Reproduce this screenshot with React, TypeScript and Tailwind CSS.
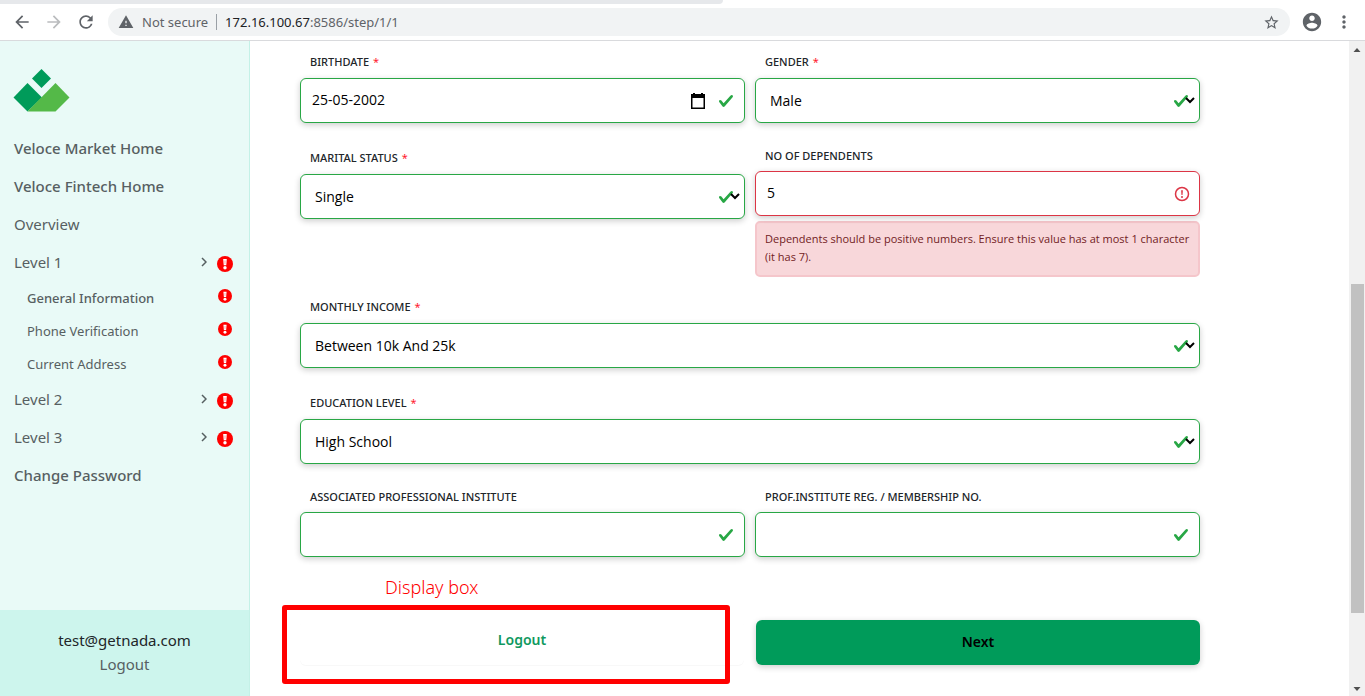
import { useState } from 'react';
import type { ReactNode } from 'react';
import { MdArrowBack, MdArrowForward, MdMoreVert, MdRefresh, MdStarBorder, MdWarning } from 'react-icons/md';

const control =
  'h-[45px] w-full appearance-none rounded-[6px] border bg-white text-sm text-black shadow-[0_2px_6px_rgba(0,0,0,0.2)] outline-none';

function CheckMark() {
  return (
    <svg viewBox="0 0 8 8" className="size-4" aria-hidden="true">
      <path
        fill="#28a745"
        d="M2.3 6.73.6 4.53c-.4-1.04.46-1.4 1.1-.8l1.1 1.4 3.4-3.8c.6-.63 1.6-.27 1.2.7l-4 4.6c-.43.5-.8.4-1.1.1z"
      />
    </svg>
  );
}

function AlertBadge({ className }: { className: string }) {
  return (
    <svg viewBox="0 0 16 16" className={className} aria-hidden="true">
      <circle cx="8" cy="8" r="8" fill="#ff0000" />
      <path d="M6.2 3h3.600l-.5 6.200H6.700z" fill="#fff" />
      <circle cx="8" cy="11.700" r="1.700" fill="#fff" />
      <path d="M7.500 4.500h1l-.15 3.600h-.7z" fill="#ff9090" />
    </svg>
  );
}

function Field({ id, label, required, children }: { id: string; label: string; required?: boolean; children: ReactNode }) {
  return (
    <div className="min-w-0">
      <label
        htmlFor={id}
        className={`flex gap-1 px-[10px] font-['Noto_Sans',sans-serif] text-[11px] leading-[18px] font-medium text-[#212529] ${required ? 'h-[27px] pt-[2px]' : 'h-6'}`}
      >
        {label}
        {required && <span className="font-normal text-[#ff1a2e]">*</span>}
      </label>
      {children}
    </div>
  );
}

function SelectBox({ id, options }: { id: string; options: string[] }) {
  return (
    <div className="relative">
      <select id={id} className={`${control} border-[#28a745] pr-10 pl-[14px]`}>
        {options.map((o) => (
          <option key={o}>{o}</option>
        ))}
      </select>
      <span className="pointer-events-none absolute inset-y-0 right-[11px] flex items-center">
        <CheckMark />
      </span>
      <svg
        viewBox="0 0 10 8"
        className="pointer-events-none absolute top-[18px] right-[5px] h-2 w-[10px]"
        fill="none"
        stroke="#000"
        strokeWidth="2"
        aria-hidden="true"
      >
        <path d="M1 2l4 4 4-4" />
      </svg>
    </div>
  );
}

function TextBox({ id, value }: { id: string; value: string }) {
  const [text, setText] = useState(value);
  return (
    <div className="relative">
      <input id={id} value={text} onChange={(e) => setText(e.target.value)} className={`${control} border-[#28a745] pr-10 pb-[2px] pl-[11px]`} />
      <span className="pointer-events-none absolute inset-y-0 right-[11px] flex items-center">
        <CheckMark />
      </span>
    </div>
  );
}

function Toolbar() {
  return (
    <header className="shrink-0 border-b border-[#d9dadd] bg-white">
      <div className="h-1 w-[53%] rounded-br-md bg-[#e6e8eb]" />
      <div className="flex h-9 items-center pr-[11px] pl-3 text-[#5f6368]">
        <button aria-label="Back" className="mr-3"><MdArrowBack size={20} /></button>
        <button aria-label="Forward" className="mr-3 text-[#babcbe]"><MdArrowForward size={20} /></button>
        <button aria-label="Reload" className="mr-3"><MdRefresh size={20} /></button>
        <div className="flex h-7 min-w-0 flex-1 items-center rounded-full bg-[#f1f3f4] px-[10px] text-[13px]">
          <MdWarning size={16} />
          <span className="ml-2 shrink-0 pt-px">Not secure</span>
          <span className="mx-2 h-4 w-px bg-[#9aa0a6]" />
          <span className="min-w-0 flex-1 truncate pt-px">
            <span className="text-[#202124]">172.16.100.67</span>:8586/step/1/1
          </span>
          <button aria-label="Bookmark this page"><MdStarBorder size={17} /></button>
        </div>
        <button aria-label="Profile" className="ml-[11px]">
          <svg viewBox="0 0 24 24" className="size-[22px]" fill="currentColor" aria-hidden="true">
            <path d="M12 2C6.480 2 2 6.480 2 12s4.480 10 10 10 10-4.480 10-10S17.520 2 12 2zm0 3c1.660 0 3 1.340 3 3s-1.340 3-3 3-3-1.340-3-3 1.340-3 3-3zm0 14.200c-2.500 0-4.710-1.280-6-3.220.03-1.990 4-3.080 6-3.080 1.990 0 5.970 1.090 6 3.080-1.290 1.940-3.500 3.220-6 3.220z" />
          </svg>
        </button>
        <button aria-label="Menu" className="ml-[11px]"><MdMoreVert size={20} /></button>
      </div>
    </header>
  );
}

function NavLink({ label, bold, level, sub }: { label: string; bold?: boolean; level?: boolean; sub?: boolean }) {
  return (
    <li>
      <a
        href="#"
        className={`flex items-center pr-4 ${sub ? 'h-[33px] pl-[27px] text-[13px]' : 'h-[38px] pl-[14px] text-[15px]'} ${bold ? 'font-medium' : ''}`}
      >
        <span className={sub ? 'flex-1' : 'flex-1 pb-[2px]'}>{label}</span>
        {level && (
          <svg viewBox="0 0 6 10" className="mr-[10px] mb-[2px] h-[10px] w-[6px]" fill="none" stroke="#555f61" strokeWidth="1.5" aria-hidden="true">
            <path d="M1 1l4 4-4 4" />
          </svg>
        )}
        {level && <AlertBadge className="mt-[2px] size-4" />}
        {sub && <AlertBadge className="mr-px mb-[6px] size-[14px]" />}
      </a>
    </li>
  );
}

function Sidebar() {
  return (
    <aside className="flex w-[250px] shrink-0 flex-col border-r border-[#c4f1e7] bg-[#e9faf7] text-[#575f62]">
      <a href="#" aria-label="Veloce" className="mt-7 mb-[18px] ml-[13px] w-fit">
        <svg viewBox="0 0 57 43" className="h-[43px] w-[57px]" aria-hidden="true">
          <path d="M28.500 0l9.500 9.500-9.500 9.500L19 9.500z" fill="#009b5a" />
          <path d="M14.500 14L29 28.500 14.500 42.500 0.500 28.500z" fill="#009b5a" />
          <path d="M42.500 14L56.500 28.500 42.500 42.500h-28z" fill="#54b948" />
        </svg>
      </a>
      <nav className="flex-1">
        <ul>
          <NavLink label="Veloce Market Home" bold />
          <NavLink label="Veloce Fintech Home" bold />
          <NavLink label="Overview" />
          <NavLink label="Level 1" level />
          <NavLink label="General Information" sub bold />
          <NavLink label="Phone Verification" sub />
          <NavLink label="Current Address" sub />
          <NavLink label="Level 2" level />
          <NavLink label="Level 3" level />
          <NavLink label="Change Password" bold />
        </ul>
      </nav>
      <div className="flex h-[86px] flex-col items-center bg-[#cdf5ed] pt-[18px] text-[15px] leading-6">
        <span className="text-[#212529]">test@getnada.com</span>
        <a href="#">Logout</a>
      </div>
    </aside>
  );
}

function ScrollBar() {
  return (
    <div className="flex w-4 shrink-0 flex-col items-center bg-[#f1f1f1]" aria-hidden="true">
      <svg viewBox="0 0 16 17" className="h-[17px] w-4"><path d="M4.500 11h7L8 7z" fill="#505050" /></svg>
      <div className="flex w-[13px] flex-1 flex-col">
        <div className="flex-[226]" />
        <div className="flex-[329] bg-[#c1c1c1]" />
        <div className="flex-[66]" />
      </div>
      <svg viewBox="0 0 16 17" className="h-[17px] w-4"><path d="M4.500 8h7L8 12z" fill="#505050" /></svg>
    </div>
  );
}

export default function App() {
  const [dependents, setDependents] = useState('5');
  const [birthdate, setBirthdate] = useState('25-05-2002');
  return (
    <div className="flex h-screen flex-col overflow-hidden bg-white font-['Noto_Sans',sans-serif]">
      <Toolbar />
      <div className="flex min-h-0 flex-1">
        <Sidebar />
        <main className="min-w-0 flex-1 overflow-hidden px-[50px] pt-[10px] font-['Open_Sans',sans-serif]">
          <form className="flex max-w-[900px] flex-col gap-6" onSubmit={(e) => e.preventDefault()}>
            <div className="grid grid-cols-2 gap-[10px]">
              <Field id="birthdate" label="BIRTHDATE" required>
                <div className="relative">
                  <input
                    id="birthdate"
                    value={birthdate}
                    onChange={(e) => setBirthdate(e.target.value)}
                    className={`${control} border-[#28a745] pr-16 pb-[2px] pl-[11px]`}
                  />
                  <div className="absolute inset-y-0 right-[11px] flex items-center gap-3">
                    <button type="button" aria-label="Choose date">
                      <svg viewBox="0 0 16 16" className="size-4" aria-hidden="true">
                        <path d="M3 0h2v1h6V0h2v1h2v15H1V1h2zM2.500 5v9.500h11V5z" fill="#000" fillRule="evenodd" />
                      </svg>
                    </button>
                    <CheckMark />
                  </div>
                </div>
              </Field>
              <Field id="gender" label="GENDER" required>
                <SelectBox id="gender" options={['Male', 'Female']} />
              </Field>
            </div>
            <div className="-mb-[5px] grid grid-cols-2 gap-[10px]">
              <Field id="marital" label="MARITAL STATUS" required>
                <SelectBox id="marital" options={['Single', 'Married']} />
              </Field>
              <Field id="dependents" label="NO OF DEPENDENTS">
                <div className="relative">
                  <input
                    id="dependents"
                    value={dependents}
                    onChange={(e) => setDependents(e.target.value)}
                    aria-describedby="dependents-error"
                    className={`${control} border-[#dc3545] pr-10 pb-[2px] pl-[11px]`}
                  />
                  <svg viewBox="0 0 16 16" className="pointer-events-none absolute top-[15px] right-[10px] size-4" aria-hidden="true">
                    <circle cx="8" cy="8" r="6.500" fill="none" stroke="#dc3545" strokeWidth="1.500" />
                    <path d="M7.100 4.300h1.800l-.4 4.700h-1z" fill="#dc3545" />
                    <circle cx="8" cy="11" r="1" fill="#dc3545" />
                  </svg>
                </div>
                <p
                  id="dependents-error"
                  className="mt-[5px] rounded-[5px] border-2 border-[#f5c6cb] bg-[#f8d7da] pt-[7px] pr-1 pb-[9px] pl-2 text-[11px] leading-[18px] text-[#721c24]"
                >
                  Dependents should be positive numbers. Ensure this value has at most 1 character (it has 7).
                </p>
              </Field>
            </div>
            <Field id="income" label="MONTHLY INCOME" required>
              <SelectBox id="income" options={['Between 10k And 25k', 'Between 25k And 50k']} />
            </Field>
            <Field id="education" label="EDUCATION LEVEL" required>
              <SelectBox id="education" options={['High School', 'Graduate']} />
            </Field>
            <div className="grid grid-cols-2 gap-[10px]">
              <Field id="institute" label="ASSOCIATED PROFESSIONAL INSTITUTE">
                <TextBox id="institute" value="" />
              </Field>
              <Field id="membership" label="PROF.INSTITUTE REG. / MEMBERSHIP NO.">
                <TextBox id="membership" value="" />
              </Field>
            </div>
            <div className="mt-[39px] grid grid-cols-2 gap-3 font-['Noto_Sans',sans-serif] text-sm font-semibold">
              <div className="relative">
                <button type="button" className="h-[45px] w-full rounded-[6px] bg-white pb-[6px] text-[#0f9960] shadow-[0_1px_1px_rgba(0,0,0,0.03)]">
                  Logout
                </button>
                <div className="pointer-events-none absolute -top-[15px] right-[14px] -bottom-[19px] -left-[18px] rounded-[3px] border-5 border-[#ff0000]" />
                <span className="pointer-events-none absolute -top-[45px] left-[85px] text-lg leading-6 font-light text-[#ff0000]">
                  Display box
                </span>
              </div>
              <button type="submit" className="h-[45px] rounded-[6px] bg-[#009b5a] pb-[2px] text-black shadow-[0_2px_6px_rgba(0,0,0,0.2)]">
                Next
              </button>
            </div>
          </form>
        </main>
        <ScrollBar />
      </div>
    </div>
  );
}
